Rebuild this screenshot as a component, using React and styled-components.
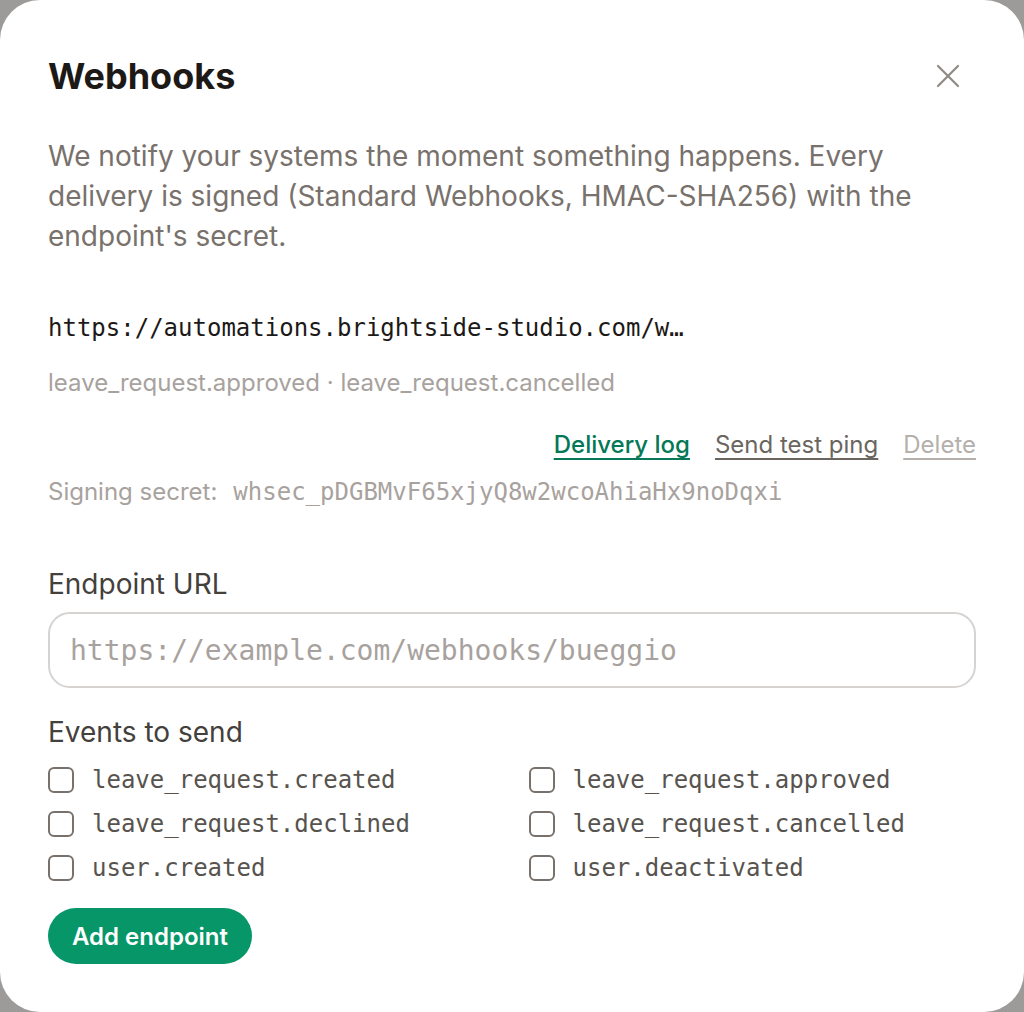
import styled, { createGlobalStyle } from "styled-components";

const GlobalStyle = createGlobalStyle`
  html, body {
    margin: 0;
    padding: 0;
    background: #9c9b99;
  }
  body {
    font-family: Inter, "Noto Sans", sans-serif;
  }
  * { box-sizing: border-box; }
`

const Modal = styled.div`
  width: 1024px;
  height: 1012px;
  background: #ffffff;
  border-radius: 40px;
  padding: 52px 48px 48px;
  display: flex;
  flex-direction: column;
`
const Header = styled.div`
  display: flex;
  justify-content: space-between;
  align-items: center;
`
const Title = styled.h1`
  margin: 0;
  font-size: 36px;
  font-weight: 700;
  color: #1c1917;
  line-height: 48px;
`
const Close = styled.button`
  border: none;
  background: none;
  padding: 0;
  margin-right: 12px;
  width: 32px;
  height: 32px;
  display: flex;
  align-items: center;
  justify-content: center;
  cursor: pointer;
`
const Lead = styled.p`
  margin: 36px 0 0;
  font-size: 28px;
  line-height: 40px;
  color: #78716c;
`
const Endpoint = styled.div`
  margin-top: 54px;
  display: flex;
  flex-direction: column;
`
const Url = styled.div`
  font-family: "DejaVu Sans Mono", monospace;
  font-size: 24px;
  line-height: 36px;
  color: #1c1917;
`
const EventList = styled.div`
  margin-top: 21px;
  font-size: 24px;
  line-height: 32px;
  color: #a8a29e;
`
const Actions = styled.div`
  margin-top: 30px;
  display: flex;
  justify-content: flex-end;
  gap: 25px;
`
const Action = styled.a`
  font-size: 24px;
  line-height: 32px;
  color: ${p => p.$color};
  text-decoration: underline;
  text-underline-offset: 5px;
  text-decoration-thickness: 2px;
  font-weight: ${p => p.$bold ? 500 : 400};
  cursor: pointer;
`
const Secret = styled.div`
  margin-top: 15px;
  font-size: 24px;
  line-height: 32px;
  color: #a8a29e;
  display: flex;
  gap: 16px;
`
const SecretCode = styled.span`
  font-family: "DejaVu Sans Mono", monospace;
  font-size: 24px;
`
const Label = styled.label`
  display: block;
  font-size: 28px;
  line-height: 36px;
  color: #44403c;
  margin-top: ${p => p.$top}px;
`
const Input = styled.input`
  margin-top: 10px;
  width: 100%;
  height: 76px;
  border: 2px solid #d6d3d1;
  border-radius: 22px;
  padding: 0 20px;
  font-family: "DejaVu Sans Mono", monospace;
  font-size: 28px;
  color: #1c1917;
  outline: none;
  &::placeholder { color: #a8a29e; }
`
const Grid = styled.div`
  margin-top: 14px;
  display: grid;
  grid-template-columns: 1fr 1fr;
  column-gap: 33px;
  row-gap: 12px;
`
const Option = styled.label`
  display: flex;
  align-items: center;
  gap: 18px;
  height: 32px;
  line-height: 32px;
  font-family: "DejaVu Sans Mono", monospace;
  font-size: 24px;
  color: #57534e;
  cursor: pointer;
`
const Box = styled.span`
  width: 26px;
  height: 26px;
  border: 2px solid #78716c;
  border-radius: 6px;
  flex-shrink: 0;
`
const Button = styled.button`
  margin-top: 24px;
  align-self: flex-start;
  height: 56px;
  padding: 0 24px;
  border: none;
  border-radius: 28px;
  background: #069668;
  color: #ffffff;
  font-family: Inter, sans-serif;
  font-size: 24px;
  font-weight: 600;
  cursor: pointer;
`

const events = [
  "leave_request.created",
  "leave_request.approved",
  "leave_request.declined",
  "leave_request.cancelled",
  "user.created",
  "user.deactivated",
]

export default function App() {
  return (
    <>
      <GlobalStyle />
      <Modal>
        <Header>
          <Title>Webhooks</Title>
          <Close aria-label="Close">
            <svg width="24" height="24" viewBox="0 0 24 24" fill="none" stroke="#8f8a84" strokeWidth="2.2" strokeLinecap="round">
              <path d="M2 2L22 22M22 2L2 22" />
            </svg>
          </Close>
        </Header>
        <Lead>
          We notify your systems the moment something happens. Every delivery is signed (Standard Webhooks, HMAC-SHA256) with the endpoint's secret.
        </Lead>
        <Endpoint>
          <Url>https://automations.brightside-studio.com/w…</Url>
          <EventList>leave_request.approved · leave_request.cancelled</EventList>
          <Actions>
            <Action $color="#047857" $bold>Delivery log</Action>
            <Action $color="#6b6560">Send test ping</Action>
            <Action $color="#b5b0ab">Delete</Action>
          </Actions>
          <Secret>
            <span>Signing secret:</span>
            <SecretCode>whsec_pDGBMvF65xjyQ8w2wcoAhiaHx9noDqxi</SecretCode>
          </Secret>
        </Endpoint>
        <Label $top={58}>Endpoint URL</Label>
        <Input placeholder="https://example.com/webhooks/bueggio" />
        <Label $top={26}>Events to send</Label>
        <Grid>
          {events.map(e => (
            <Option key={e}>
              <Box />
              {e}
            </Option>
          ))}
        </Grid>
        <Button>Add endpoint</Button>
      </Modal>
    </>
  );
}
